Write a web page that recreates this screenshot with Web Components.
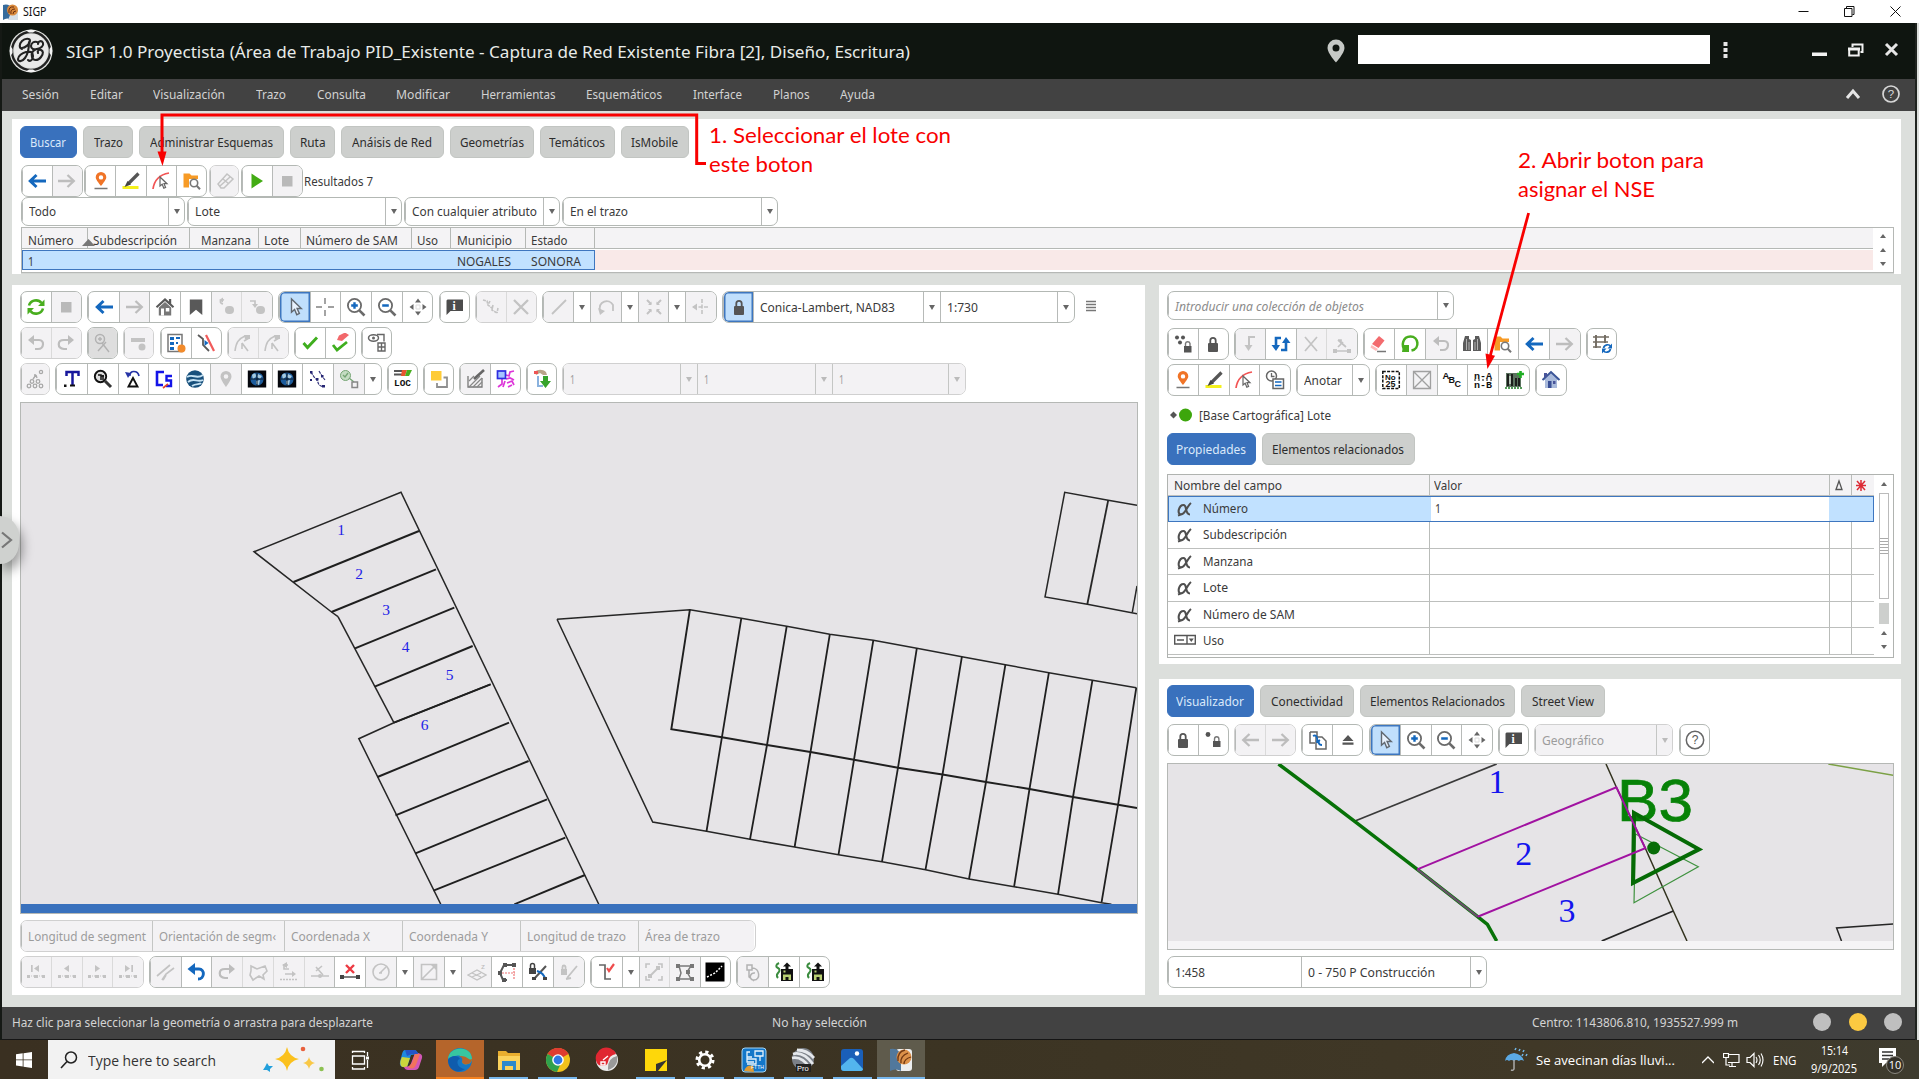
<!DOCTYPE html>
<html lang="es"><head><meta charset="utf-8"><title>SIGP</title>
<style>
html,body{margin:0;padding:0}
body{width:1919px;height:1079px;overflow:hidden;font-family:"Noto Sans","Open Sans",sans-serif;font-size:13px;color:#3a3a3a;background:#dcdfdc}
</style></head><body>
<sigp-app></sigp-app>
<script>
const G='#595959', D='#c3c3c3', B='#1468be';
const st=(d,c=G,w=1.6,x='')=>`<path d="${d}" fill="none" stroke="${c}" stroke-width="${w}" ${x}/>`;
const fl=(d,c=G,x='')=>`<path d="${d}" fill="${c}" ${x}/>`;
const tx=(x,y,s,t,c='#111',e='')=>`<text x="${x}" y="${y}" font-size="${s}" fill="${c}" ${e}>${t}</text>`;
const lens=(s)=>`<circle cx="8.5" cy="8.5" r="6.6" fill="#fff" stroke="#6b6b6b" stroke-width="1.8"/>${st('M13.3 13.3L18.5 18.5','#6b6b6b',2.6)}${st(s,B,2.4)}`;
const globe=`<rect x=".8" y="1.5" width="18.4" height="17" fill="#04060c"/><circle cx="10" cy="10" r="6.6" fill="#1d5c9c"/>${fl('M5 6c3-3 4-1 4 1s-3 2-3 4zM11 5l4 2-2 3-3-2zM9 12l4-1-1 5-3-1z','#a5c9df')}${st('M3.5 10h13M10 3.5v13','#08101c',.9)}`;
const save=`${st('M5 1c-4 2-3 4-1 5s2 3 0 5-1 4 0 5','#3b8c3f',2)}<rect x="7" y="7" width="12" height="12" fill="#111"/>${fl('M9 12.500h8v5.500H14.500v-3h-3v3H9zM9.500 8.500h2v2h-2z','#b8cf72')}${fl('M13 .5l4 4h-2.500V8h-3V4.500H9z','#111')}`;
const pad=(c,b)=>`<rect x="${b}" y="9" width="10" height="9" rx="1" fill="${c}"/>${st(`M${b+2.3} 9.5V6.5a2.7 2.7 0 0 1 5.4 0V9.5`,c,1.8)}`;
const nav=(d)=>fl(d,D)+st('M1 14h18',D,1.2,'stroke-dasharray="1 1"')+fl('M1 13h3v3H1zM8 13h4v3H8zM16 13h3v3h-3z',D);
const I={
refresh:st('M3 8.5C4.5 3 12 1.500 15.500 6M17 11.500C15.500 17 8 18.500 4.500 14','#49ae1f',2.6)+fl('M18.500 2.500v6.500h-6.500zM1.500 17.500V11H8z','#49ae1f'),
stop:fl('M5 5h10.500v10.500H5z','#b9b9b9'),
back:st('M19 10H3.500M9.500 4L3.200 10l6.300 6',B,2.9),
backG:st('M19 10H3.500M9.500 4L3.200 10l6.300 6','#bdbdbd',2.3),
fwd:st('M1 10h15.500M10.500 4l6.300 6-6.300 6','#bdbdbd',2.3),
home:fl('M10 1L.800 9.500 2.200 11 10 4l7.800 7 1.400-1.500-3-2.700V2h-2.300v2.600z')+fl('M3.800 10.500L10 5l6.200 5.500V18.500H3.800z','#777')+fl('M6 11.500h3v7H6zM10.800 11h3.500v3.500h-3.500z','#fff'),
mark:fl('M3.800 2.500h12.500v15.500L10 12.700 3.800 18z'),
gl1:st('M7 7C3 6 4 2 8 3',D,1.7)+fl('M7 .500v5L3 3z',D)+'<rect x="9" y="9" width="9" height="8" rx="4" fill="#c3c3c3"/>',
gl2:st('M3 4h5v4',D,1.7)+fl('M5 7h6l-3 4z',D)+'<rect x="9" y="9" width="9" height="8" rx="4" fill="#c3c3c3"/>',
cursor:`<path d="M6.500 2v13.200l3.100-2.800 2.200 5.300 2.600-1.200-2.300-5h4.200z" fill="#e8f2fd" stroke="#616870" stroke-width="1.400"/>`,
cross:st('M10 1v6M10 13v6M1 10h6M13 10h6','#a0a0a0',1.9),
zin:lens('M8.500 5.200v6.600M5.200 8.500h6.600'),zout:lens('M5.200 8.500h6.600'),
pan:fl('M10 1.500l3 4H7zM10 18.500l3-4H7zM1.500 10l4-3v6zM18.500 10l-4-3v6z','#666')+st('M8 8h4v4H8z','#dedede',1),
info:fl('M2.500 2.500h15.500v11.500H5.500L1.500 18V3.500z','#4c4c4c')+tx(7.500,12.800,11.500,'i','#fff','font-weight="700" font-family="Liberation Serif"'),
path:st('M2 3l4 1 1 4M9 4l-2 4 5 4M12 8l-1 5 5 3M17 11l-1 5',D,1.600,'stroke-dasharray="3 .8"'),
x:st('M3 3l14 14M17 3L3 17',D,2.300),
line:st('M3 17L17 3',D,1.800),
arc:st('M4 14C2 4 13 1 17 8v6',D,1.800)+fl('M2 11l7 3-5 4z',D),
expand:st('M3 3l4 4M17 3l-4 4M3 17l4-4M17 17l-4-4',D,2)+fl('M7.500 8V4.500L4 8zM12.500 8V4.500L16 8zM7.500 12v3.500L4 12zM12.500 12v3.500L16 12z',D),
plus:st('M2 10h16M11 2v16',D,1.600,'stroke-dasharray="4 1.500"')+fl('M1 10l5-3.500v7z',D),
lock:pad('#555',5),
undo:st('M4 7h9c6 0 5 9-1 9H9','#bdbdbd',2.200)+fl('M8 2v10L2 7z','#bdbdbd'),
redo:st('M16 7H8C1 7 1 15 8 16h3','#bdbdbd',2.200)+fl('M12 2v10l6-5z','#bdbdbd'),
undoB:st('M5 7h8c6 0 6 10-1 10',B,2.900)+fl('M9 1v12L1.500 7z',B),
zx:'<circle cx="7" cy="6" r="4.500" fill="none" stroke="#b2b2b2" stroke-width="1.500"/>'+st('M9 10l7 9M13 9l-8 9M7 4v4M5 6h4','#b2b2b2',1.400),
rem:fl('M2 5h14v4H2z',D)+'<circle cx="13" cy="14" r="3.500" fill="#c3c3c3"/>',
list:st('M2 1.500h14v17H2z','#777',1.500)+fl('M4 4h4v3H4zM4 9h4v3H4zM4 14h4v3H4zM10 4h4v2h-4zM10 9h2v2h-2z',B)+'<circle cx="15.500" cy="15.500" r="4" fill="#f28b2b"/>',
split:st('M2 2l5 4v6l6 6','#5a5a5a',1.800)+st('M10 2l8 16','#f15b5b',2.200)+fl('M8.500 7l4 3-4 3z',B),
bz:st('M2 18C3 10 5 6 12 3M11 8l5-3M9 10l6 8M9 10v6',D,1.600)+fl('M11 2h6v4h-5z',D),
check:st('M3.500 10l4 4.500L17 4.500','#3fae1e',2.900),
echeck:st('M3 12l4 5L17 9','#3fae1e',2.800)+fl('M9 2.500l6-3 4 2.500-7 6-5-1z','#f2686b'),
glist:'<ellipse cx="6.500" cy="5" rx="5" ry="3.200" fill="none" stroke="#666" stroke-width="1.500"/><circle cx="6.500" cy="5" r="1.500" fill="#666"/>'+st('M10 1.500h7v7M11 10h7v8h-7zM11 14h7M14.500 10v8','#666',1.400),
dots:'<g fill="none" stroke="#a9a9a9" stroke-width="1.300"><circle cx="4" cy="17" r="1.800"/><circle cx="10" cy="17" r="1.800"/><circle cx="16" cy="17" r="1.800"/><circle cx="7" cy="12.500" r="1.800"/><circle cx="13" cy="12.500" r="1.800"/><circle cx="16" cy="3" r="1.600"/><path d="M8 10l3-4M11 6l1 3M9 6h2"/></g>',
T:st('M4.500 7V3h12v4M10.500 3v13.500','#17179c',2.500)+fl('M8 15.500h5v2H8zM2 15.500h2.500V18H2z','#111'),
magq:'<circle cx="7.500" cy="7.500" r="5.700" fill="#ddd" stroke="#111" stroke-width="1.900"/>'+st('M5 6h3v5M10 6v5M8 7h3','#111',1.500)+st('M12 12l6 6','#333',3),
tri:st('M7 7c-1-6 8-6 9 0','#2634a6',1.700)+fl('M2 3l6 1-3 5z','#2634a6')+st('M10 9L5.500 17.500h9z','#111',1.900),
cs:st('M10 3H3v13h6','#1414e8',2.600)+st('M18 7h-5.500v4.500H17V17h-5','#1414e8',2.400)+st('M9 19L14 15','#e2432c',1.700),
gearth:'<circle cx="10" cy="10" r="8.800" fill="#18507c"/>'+st('M2 8c6-4 9 3 16-2M3 13c6-5 9 1 15-2M7 17c4-3 8-1 9-3','#c6e2f3',1.900),
pinG:fl('M10 2a5.500 5.500 0 0 1 5.500 5.500C15.500 11 10 18 10 18S4.500 11 4.500 7.500A5.500 5.500 0 0 1 10 2zm0 3.200a2.300 2.300 0 1 0 0 4.600 2.300 2.300 0 0 0 0-4.600z',D,'fill-rule="evenodd"'),
globe,
nodes:st('M3 3l3 5 3 3 2 5 4 2M11 2l3 5 3 4','#35357d',1.200,'stroke-dasharray="3 1"')+fl('M2 2h2.500v2.500H2zM8 9h2.500v2.500H8zM14 16h3v2.500h-3zM2 10h2v2H2zM13 6h2.500v2.500H13z','#252573'),
gnodes:'<circle cx="6.500" cy="6.500" r="5" fill="#c4dcc2" stroke="#75a574"/>'+st('M4 6l2 2 3-4M10 9l5 4','#75a574',1.400)+st('M13 13h5.500v5.500H13z','#888',1.500),
loc:fl('M1 1h8v2H1zM1 4.500h8v2H1z','#555')+fl('M9 1h5l-2 6H8z','#e8552f')+fl('M14 1h5l-3 6h-4z','#49ae1f')+tx(1,17,9,'LOC','#111','font-weight="700" font-family="Liberation Mono" textLength="17" lengthAdjust="spacingAndGlyphs"'),
ysq:fl('M2 2h10.500v9.500H2z','#fecb36')+st('M14.500 8.500H18v9.500H8v-4','#8f8f8f',1.800),
hatch:st('M2 7v11h14V9','#777',1.300)+st('M3 18L14 7M7 18l9-9M3 12l5-5M11 18l5-5','#888',1.200)+st('M8 10L18 1','#666',2.600),
pink:'<g fill="none" stroke="#dd35d8" stroke-width="1.700"><path d="M10 6l3 1 1-4 4-1M10 10l4-1 4 2M11 14l5-2 2 4M12 18l4-2M6 10v5l-4 3M9 12l-2 6"/></g><rect x="1.500" y="2" width="8" height="7.500" fill="#a6c5ff" stroke="#2d2de0" stroke-width="1.700"/>',
arrG:fl('M3 3c2-3 8-3 11 0l1 3-4 0-3-2-4 2z','#b9a489')+fl('M2 2h4v3H2z','#e55')+st('M6 7v10h5','#8ab2de',2)+fl('M11 7h5v5h3l-5.500 7L8 12h3z','#37a32c'),
pinO:fl('M10 1a5.300 5.300 0 0 1 5.300 5.300C15.300 9 10 15 10 15S4.700 9 4.700 6.300A5.300 5.300 0 0 1 10 1zm0 3.200a2.200 2.200 0 1 0 0 4.400 2.200 2.200 0 0 0 0-4.400z','#f07427','fill-rule="evenodd"')+st('M3.500 17.500h13','#777',1.500),
pen:st('M1.500 16.500h16','#f4f01c',3.200)+st('M7.500 12.500L17.500 2.500','#555',3.200)+fl('M6.500 10l3.500 3.500L3.500 16z','#444'),
sel:st('M2 18C3 11 6 4 18 2','#f25454',1.700)+`<path d="M9 6v9l2.200-1.800 1.600 4 1.800-.800-1.600-3.700h3z" fill="#fff" stroke="#666" stroke-width="1.200"/>`,
fold:fl('M1.500 2.500h6l2 2H16v12H1.500z','#f79b26')+fl('M7 8h11v11H7z','#fff')+'<circle cx="12" cy="12" r="3.700" fill="#fff" stroke="#777" stroke-width="1.600"/>'+st('M14.700 14.700l3.300 3.500','#777',2),
erG:st('M3 13l9-10 6 5-9 9H6zM8 8l6 5M5 15l10-9',D,1.500),
play:fl('M4.500 2.500v15L16 10z','#43ac14'),
dlock:'<g fill="#555"><circle cx="4" cy="3.500" r="2"/><circle cx="10" cy="3.500" r="2"/><circle cx="7" cy="8.500" r="2"/><rect x="11" y="12" width="7.500" height="6.500"/></g>'+st('M12.500 12V9.500a2.300 2.300 0 0 1 4.500 0V12','#777',1.400),
dlock2:'<g fill="#555"><circle cx="5" cy="4.500" r="2.400"/><rect x="10" y="11" width="7.500" height="6"/></g>'+st('M11.500 11V9a2.200 2.200 0 0 1 4.400 0V11','#777',1.400),
dn:st('M15 3H9v11',D,2)+fl('M4.500 11h8l-4 6z',D),
updn:st('M10 4H5v10M10 16h5V6',B,2.600)+fl('M.5 11h8.500l-4 6zM11 9h8.500l-4.500-6z',B),
xg:st('M4 3l12 14M16 3L4 17',D,1.700),
up:st('M1 17h18M6 6l8 7M6 13l5-5M6 6h3v4',D,1.700)+fl('M1 15h4v4H1zM15 15h4v4h-4z',D),
erase:fl('M10 2l5.500 4.500L9.500 14l-6.500-4z','#f36b6e')+fl('M2.500 11L9 15l-2 2-5.500-3.500z','#fbb')+st('M8 17.500h9','#777',1.500),
circG:st('M6 16.500C0 12 3 2.500 10.500 2.500c8 0 10 12 1 14','#49ae1f',2.500)+fl('M3 11h6v7H2z','#49ae1f'),
bino:fl('M3 2h4v3l2 1v11H1V9zM17 2h-4v3l-2 1v11h8V9z','#5b5b5b')+st('M4.500 5v11M15.500 5v11M7 8v8M13 8v8','#bbb',.9),
rail:st('M4 1v13M13 1v8','#736c62',1.900)+st('M1 3h16M1 8h15M1 13h8','#736c62',1.600)+st('M11.500 14c1-4 6-4 7-1.500M18.500 15c-1 4-6 4-7 1.500',B,1.700)+fl('M20 9.500v5h-4.500zM10 19.500v-5h4.500z',B),
clock:'<circle cx="6.500" cy="6" r="5" fill="#fff" stroke="#666" stroke-width="1.500"/>'+st('M6.500 3v3.500h3','#666',1.300)+`<path d="M8 9h10.500v9.500H8z" fill="#fff" stroke="#666" stroke-width="1.500"/>`+st('M10 12h6.500M10 15.500h6.500',B,1.500),
no25:`<rect x="1.800" y="1.500" width="16.500" height="17" fill="none" stroke="#111" stroke-width="1.500" stroke-dasharray="3 1.300"/>`+tx(4,9.500,8,'No','#111','font-weight="700"')+tx(4.500,17,9,'25','#111','font-weight="700"'),
xbox:st('M1.500 1.500h17v17h-17zM1.500 1.500l17 17M18.500 1.500l-17 17','#a0a0a0',1.300),
abc:tx(.5,9,9.500,'A','#111','font-weight="700"')+tx(6.500,13,9,'B','#111','font-weight="700"')+tx(12.500,17,9,'C','#111','font-weight="700"'),
nanb:tx(1,8.500,9,'n-A','#111','font-weight="700" textLength="18" lengthAdjust="spacingAndGlyphs" font-family="Liberation Mono"')+tx(1,17.500,9,'n-B','#111','font-weight="700" textLength="18" lengthAdjust="spacingAndGlyphs" font-family="Liberation Mono"')+st('M1 10h18','#111',1,'stroke-dasharray="2 2"'),
film:fl('M2 3h15v14H2z','#5b725f')+st('M4 4v12M8 4v12M12 8v8M15 8v8','#111',1.700)+st('M6 6v8','#e4ede4',1.300)+st('M13 4h7M16.500 1v7','#20ad24',2.600)+st('M1 18h17','#1d7d25',1.300,'stroke-dasharray="2 1"'),
house:fl('M10 1.500L1 10h3v8h12v-8h3z','#a9badb')+st('M1.500 10L10 2l8.500 8','#3b5598',2)+fl('M7 11h3.500v7H7z','#394f95')+fl('M12 11h2.500v3H12zM3 3h3v4H3z','#48549a'),
docs:st('M2 2h7v5M2 2v11h5M8 7h6l4 4v8H8z','#666',1.500)+st('M5 6c4-2 5 3 4 7M14 15c-4 0-4-4-2-5',B,1.900),
eject:fl('M10 5l5.500 6h-11zM4.500 12.500h11v2.300h-11z','#555'),
help:'<circle cx="10" cy="10" r="8.700" fill="none" stroke="#666" stroke-width="1.500"/>'+tx(6.700,14.200,12,'?','#555'),
n1:nav('M5 3h1.700v7H5zM13 3v7L8 6.500z'),n2:nav('M12 3v7L7 6.500z'),n3:nav('M8 3v7l5-3.500z'),n4:nav('M13.300 3H15v7h-1.700zM7 3v7l5-3.500z'),
seg:st('M1 14L14 3M6 18l4-6 8-6M7 18l3-5',D,1.700),
poly:st('M3 4l6 3 8-3 2 5-4 4 1 4-5-3-6 4-3-5 1-4z',D,1.600),
lr:st('M9 3H5v4h5M6 12h9',D,1.600)+fl('M8 0v6L3 3zM13 9v6l4-3z',D)+st('M1 17.500h18',D,1.500,'stroke-dasharray="2 1"'),
nx:st('M1 14h18M6 5l7 8M12 4l-6 5',D,1.600)+'<circle cx="10" cy="14" r="2" fill="#c3c3c3"/>',
rx:st('M6 3l8 8M14 3l-8 8','#ec3b43',2.400)+st('M2 15h16','#555',1.500)+fl('M0 13h4v4H0zM16 13h4v4h-4z','#444'),
circ:'<circle cx="10" cy="10" r="8" fill="none" stroke="#c3c3c3" stroke-width="1.600"/>'+st('M9 11l6-6M8 11h3',D,1.500),
sq:st('M2.500 2.500h15v15h-15zM3 17L17 3',D,1.600)+fl('M12 3h5v5z',D),
zz:st('M1 13l9-5 9 5-9 5zM5 15l9-4M5 11l9 4',D,1.300)+tx(14,6.5,8,'z','#bbb'),
rpoly:st('M16 3H7L3 11l3 7h4','#555',2)+st('M5 11h13M17 6v12','#e77',1.200,'stroke-dasharray="2 1"')+fl('M6 1h4v4H6zM15 1h4v4h-4zM1 9h4v4H1zM5 16h4v4H5z','#555'),
lk:fl('M1 6h7v6H1z','#444')+st('M2.500 6V3.500a2 2 0 0 1 4 0V6','#444',1.500)+st('M6 17L18 4','#555',2)+st('M9 9q7 2 8 8',B,2)+fl('M4 15h4v3H4zM15 15h4v3h-4z','#444'),
lkg:fl('M2 7h6v6H2z',D)+st('M3.500 7V5a1.500 1.500 0 0 1 3 0v2M8 16L18 4M7 17l5-1',D,1.800),
corner:st('M2 3h6v14h6','#666',1.700)+st('M10 6l2 3L17 2','#ee4d4d',2.200),
frame:st('M2 6V2h4M14 2h4v4M18 14v4h-4M6 18H2v-4',D,1.600)+st('M6 14l8-8',D,1.800)+fl('M4 12h4v4H4zM12 4h4v4h-4z',D),
star:st('M4 4h12l-4 6 4 7H4l2-6z','#7a7a7a',1.500)+fl('M1 2h4v4H1zM15 2h4v4h-4zM1 15h4v4H1zM15 15h4v4h-4zM11 8h4v4h-4z','#777'),
blk:fl('M.500 .500h19v19H.500z','#000')+st('M2 15l4-2 4-2 7-7','#fff',1.500,'stroke-dasharray="2 1.500"'),
clip:st('M4 3h5v5H4zM9 6c8 0 9 12 2 12-6 0-4-8 1-7M6 8v7l5 4',"#b2b2b2",1.500),
save,
};
const icon=(n,s=20)=>`<svg width="${s}" height="${s}" viewBox="0 0 20 20" font-family="Liberation Sans">${I[n]||''}</svg>`;
const define=(name,html,after)=>customElements.define(name,class extends HTMLElement{
 connectedCallback(){ if(this.shadowRoot)return; const r=this.attachShadow({mode:'open'}); r.innerHTML=typeof html==='function'?html(this):html; if(after)after(this,r);}
});
const F=(t,w,c='')=>`<fit-text w="${w}" ${c}>${t}</fit-text>`;

/* a line of text stretched horizontally to the width given in "w" */
define('fit-text',`<style>:host{display:block;white-space:nowrap;flex:none}span{display:inline-block;transform-origin:0 50%}</style><span><slot></slot></span>`,(h,r)=>{
 const s=r.querySelector('span'),w=+h.getAttribute('w'),n=s.getBoundingClientRect().width; h.style.width=w+'px'; if(n)s.style.transform=`scaleX(${w/n})`;
});

/* a group of joined toolbar cells: icon[-|*|#], v[-], or t|width|textWidth|text[|flag]; "~" stands for a comma inside a text */
define('tool-group',h=>{
 const items=h.getAttribute('items').split(','),w=h.getAttribute('w'),H=h.getAttribute('h')||32;
 const off=items.every(i=>/-$/.test(i));
 const cells=items.map(i=>{
  if(i[0]==='t'&&i[1]==='|'){const[,cw,tw,t,f]=i.split('|');return `<div class="c t ${f==='-'?'off':''} ${f==='i'?'it':''}" style="flex:none;width:${cw}px">${F(t.replace('~',','),tw)}</div>`}
  const m=i.match(/^([A-Za-z0-9]+)([-*#]?)$/),k={'-':'off','*':'on','#':'pr','':''}[m[2]];
  if(m[1]==='v')return `<div class="c v ${k}"><i></i></div>`;
  return `<div class="c ${k}">${icon(m[1])}</div>`;}).join('');
 return `<style>:host{display:flex;box-sizing:border-box;flex:none;width:${w}px;height:${H}px;border:1.500px solid ${off?'#d0d0d0':'#b3b8b4'};border-radius:7px;overflow:hidden;background:#fff}
 .c{flex:1 1 0;min-width:0;display:flex;align-items:center;justify-content:center;border-left:1px solid #b7bab8;box-sizing:border-box;overflow:hidden}
 .c:first-child{border-left:0}.c.off{background:#f3f2f4;color:#9c9c9c}.c.off+.c.off{border-left-color:#dadada}.c.t.off+.c.off,.c.v.off+.c.t.off,.c.t.off+.c.t.off{border-left-color:#c4c6c4}
 .c.on{background:#c0dffc;box-shadow:inset 0 0 0 1.500px #3d76bf;border-radius:5px 0 0 5px}.c.pr{background:#dedede}
 .c.t{justify-content:flex-start;padding-left:6px}.it{font-style:italic;color:#8b8b8b}
 .v{flex:none;width:17px}.v i{border:3.500px solid transparent;border-top:5px solid #666;border-bottom:0}.v.off i{border-top-color:#bbb}
 svg{display:block;flex:none}</style>${cells}`;});
const TG=(w,items,h)=>`<tool-group w="${w}" items="${items}"${h?` h="${h}"`:''}></tool-group>`;

define('tab-button',h=>`<style>:host{display:flex;align-items:center;justify-content:center;flex:none;box-sizing:border-box;width:${h.getAttribute('w')}px;height:32px;border:1.500px solid #c2c5c2;border-radius:6px;background:#cdcfcd;color:#2c2c2c}
:host([active]){background:#3971bd;border-color:#3971bd;color:#dbe9fa}</style>${F(h.getAttribute('label'),h.getAttribute('tw'))}`);
const TB=(l,w,tw,a='')=>`<tab-button label="${l}" w="${w}" tw="${tw}" ${a}></tab-button>`;

define('window-title',`<style>:host{display:flex;align-items:center;height:23px;background:#fff;color:#111;font-size:12px;padding-left:2px}b{flex:1}.w{display:flex;gap:35px;padding-right:18px}</style>
<svg width="17" height="18" viewBox="0 0 17 18" style="margin-right:4px"><path d="M1 2q7-2 9 5v10q-5-3-9 0z" fill="#356b9c"/><path d="M10 7h6v10H6z" fill="#d6dfe8"/><circle cx="10.500" cy="7" r="5.500" fill="#d98a3d"/><path d="M7 10q-1-7 5-6M9 11q-1-5 4-5M11 11q0-3 3-3" fill="none" stroke="#6b2f10"/></svg>
${F('SIGP',23.500)}<b></b><div class="w"><svg width="11" height="11"><path d="M0.5 5.500h10" stroke="#111"/></svg><svg width="11" height="11"><path d="M.500 2.500h7.500v8H.500zM2.500 2V.500h7.500v8H8.500" fill="none" stroke="#111"/></svg><svg width="11" height="11"><path d="M.500 .500l10 10M10.500 .500l-10 10" stroke="#111"/></svg></div>`);

define('app-header',`<style>:host{display:flex;align-items:center;height:56px;background:#0f1510;color:#e8ebe8;font-size:17px;padding-left:7px}
.sp{flex:1}.in{width:352px;height:29px;background:#fff;margin:0 13px 3px 13px}svg{flex:none}.m{margin-bottom:4px}</style>
<svg width="44" height="44" viewBox="0 0 44 44" style="margin-right:13px"><circle cx="22" cy="22" r="21.500" fill="#dfe1df"/><circle cx="22" cy="22" r="19" fill="none" stroke="#222" stroke-width="2.400"/><circle cx="22" cy="22" r="16.800" fill="#e9e9e9"/>
<g fill="none" stroke="#222" stroke-width="2.100" stroke-linecap="round"><path d="M13 20c-3-1-3-5 0-8s8-3 8 0-5 7-8 7M20 13c0 6-1 12-4 16s-7 4-7 1 4-6 8-7 7 0 7 4-3 6-5 4M28 13c-3-1-6 1-6 4s3 4 6 3c-4 1-6 4-5 8s6 4 9 0 2-6 0-7-4 1-3 3M28 20c4-1 7-3 6-6s-5-2-5 1"/></g><g fill="#f4f4f4"><path d="M17 1.500q5-1.500 10 0l-3 2h-4zM17 42.500q5 1.500 10 0l-3-2h-4zM1.500 17q-1.500 5 0 10l2-3v-4zM42.500 17q1.500 5 0 10l-2-3v-4z"/></g></svg>
${F('SIGP 1.0 Proyectista (Área de Trabajo PID_Existente - Captura de Red Existente Fibra [2], Diseño, Escritura)',844)}
<span class="sp"></span><svg style="margin-bottom:1px" width="18" height="24" viewBox="0 0 18 24"><path d="M9 .500a8.500 8.500 0 0 1 8.500 8.500C17.500 14 9 23.500 9 23.500S.500 14 .500 9A8.500 8.500 0 0 1 9 .500zm0 5a3.500 3.500 0 1 0 0 7 3.500 3.500 0 0 0 0-7z" fill="#c6c9c6" fill-rule="evenodd"/></svg>
<div class="in"></div><svg class="m" style="margin-bottom:3px" width="5" height="16"><path d="M0.500 0h4v4h-4zM.500 6h4v4h-4zM.500 12h4v4h-4z" fill="#e6e6e6"/></svg>
<svg width="90" height="18" viewBox="0 0 90 18" style="margin:0 14px 3px 83px"><path d="M1 11.5h15v3.500H1z" fill="#f2f2f2"/><path d="M38.200 8h9.500v6.500h-9.500zM41.500 6V3.500h10v7.500h-2" fill="none" stroke="#f2f2f2" stroke-width="2"/><path d="M37 8h12" stroke="#f2f2f2" stroke-width="3"/><path d="M75 3l11 11M86 3L75 14" stroke="#e6e6e6" stroke-width="3"/></svg>`);

define('menu-bar',`<style>:host{display:flex;align-items:center;gap:30.700px;height:32px;box-sizing:border-box;padding-bottom:2px;background:#424242;color:#d2d2d2;padding-left:20px}b{flex:1}svg{margin-right:-11px}svg:last-child{margin-right:14px}</style>
${[['Sesión',37],['Editar',33],['Visualización',72],['Trazo',30],['Consulta',49],['Modificar',54],['Herramientas',74.500],['Esquemáticos',76],['Interface',49],['Planos',36.500],['Ayuda',35]].map(a=>F(...a)).join('')}<b></b>
<svg width="16" height="12"><path d="M2 10l6-7 6 7" fill="none" stroke="#e6e6e6" stroke-width="3"/></svg><svg width="20" height="20" font-family="Liberation Sans"><circle cx="10" cy="10" r="8" fill="none" stroke="#d6d6d6" stroke-width="1.700"/><text x="6.800" y="14" font-size="11.500" fill="#ddd">?</text></svg>`);

define('search-panel',`<style>:host{display:flex;flex-direction:column;box-sizing:border-box;background:#fff;height:155px;width:1889px;padding:7px 8px 0 7.500px}
.r{display:flex;align-items:center}.tabs{gap:6px}.tools{gap:1.700px;margin:7px 0 0 1.500px;height:32px}.cb{gap:2px;margin-left:1.500px;height:28px;padding-bottom:1px}
.tb{display:flex;flex:none;width:1873px;height:46px;border:1px solid #b5b8b5;margin:1px 0 0 1.500px;box-sizing:border-box;box-shadow:0 1px #d4d7d4}
.g{flex:1;display:flex;flex-direction:column}.h{display:flex;height:20px;background:#f4f3f5;border-bottom:1px solid #b5b8b5}
.h div{box-sizing:border-box;border-right:1px solid #b5b8b5;display:flex;align-items:center;padding-left:6px;padding-top:3px;flex:none}
.row{display:flex;height:20px;margin-top:1px;background:#f9e9e8}.s{box-sizing:border-box;width:573px;border:1.500px solid #3e76bf;background:#c1e1ff;display:flex;align-items:center;padding-left:5px;padding-top:2px}
.sc{width:20px;display:flex;flex-direction:column;align-items:center;justify-content:space-between;padding:6px 0;box-sizing:border-box}.u{border:3px solid transparent;border-bottom:4px solid #666;border-top:0}.d{border:3px solid transparent;border-top:4px solid #666;border-bottom:0}</style>
<div class="r tabs">${TB('Buscar',57.500,36,'active')}${TB('Trazo',50,29)}${TB('Administrar Esquemas',144.500,123)}${TB('Ruta',45.500,25.500)}${TB('Anáisis de Red',102.500,80)}${TB('Geometrías',84,64)}${TB('Temáticos',75,56)}${TB('IsMobile',68.500,47)}</div>
<div class="r tools">${TG(61.500,'back,fwd-')}${TG(123,'pinO,pen,sel,fold')}${TG(30.500,'erG-')}${TG(61.500,'play,stop-')}${F('Resultados 7',69)}</div>
<div class="r cb">${TG(164,'t|146|27|Todo,v',29)}${TG(215,'t|197|25|Lote,v',29)}${TG(156,'t|138|125|Con cualquier atributo,v',29)}${TG(216,'t|198|58|En el trazo,v',29)}</div>
<div class="tb"><div class="g"><div class="h">
<div style="width:66px">${F('Número',45.500)}<svg width="14" height="8" style="position:relative;left:8px;top:2px;flex:none"><path d="M0 8L6.500 1 13 8z" fill="#777"/></svg></div><div style="width:102px;padding-left:5px">${F('Subdescripción',84)}</div><div style="width:69px;padding-left:11px">${F('Manzana',50)}</div><div style="width:42px;padding-left:5px">${F('Lote',25)}</div><div style="width:111px;padding-left:5px">${F('Número de SAM',92)}</div><div style="width:39px;padding-left:5px">${F('Uso',21)}</div><div style="width:75px">${F('Municipio',55)}</div><div style="width:69px;padding-left:5px">${F('Estado',36.500)}</div></div>
<div class="row"><div class="s"><div style="width:423px">${F('1',6)}</div><div style="margin-left:6px;width:74px">${F('NOGALES',54)}</div>${F('SONORA',50)}</div></div></div>
<div class="sc"><span class="u"></span><span class="u"></span><span class="d"></span></div></div>`);

const L=(pts,w=1.500,c='#262626')=>`<polyline points="${pts}" fill="none" stroke="${c}" stroke-width="${w}"/>`;
const top_=[[741.3,618.3],[786.7,626.3],[829.8,634.3],[873.3,640.3],[916.8,648.3],[961.9,656.7],[1005.4,664.7],[1048.9,672.7],[1092.4,680.3],[1136.3,687.7]];
const mid_=[[721.9,737.3],[767,745],[810.5,752],[854,759.7],[898,767.7],[942.5,774.5],[986,782],[1029.5,789],[1073,797],[1118.1,804.7]];
const bot_=[[706.5,831.3],[750,839.3],[794.6,847],[838.5,854.7],[882,861.7],[925.5,869.7],[969,879],[1014.1,886.7],[1058,894.3],[1101.5,902.7]];
define('parcel-map',`<style>:host{display:block;box-sizing:border-box;width:1118px;height:512px;border:1px solid #b5b8b5;border-top-width:1.500px}svg{display:block;background:#e6e4e7}.b{height:9px;background:#3971bd}</style>
<svg width="1116" height="501" viewBox="21 403 1116 501">
${L('338,616.7 331.5,612 254,551.7 401,492.3 598.8,904.3')}${L('338,616.7 393.9,722.7')}${L('490.6,684.3 393.9,722.7 358.8,738.7 440.8,904.3')}
${[[419,531,293.5,582],[436,569.3,331.5,612],[454.3,607.7,355,648.3],[472.7,646,374.7,686.7],[490.6,684.3,393.9,722.7],[509,722.7,377.5,777],[528.6,761,395.5,815.3],[547,799.3,415.5,853.3],[565.3,837.7,433.5,890.7],[585,875,514.3,904.3]].map(p=>L(p.join(' '),1.900,'#1f1f1f')).join('')}
${L('557,619.3 689.9,609.7 '+top_.join(' '))}${L('557,619.3 652.7,822 '+bot_.join(' ')+' 1111.4,904.3')}${L('689.9,609.7 671.3,729.3 '+mid_.join(' ')+' 1137,808',1.900,'#1f1f1f')}
${top_.map((t,i)=>L([t,mid_[i],bot_[i]].join(' '),1.800,'#1f1f1f')).join('')}
${L('1137,505.3 1108.2,500.3 1064.7,492.3 1045,597 1087.3,604.3 1137,613.7')}${L('1108.2,500.3 1087.3,604.3',1.800)}${L('1132.3,612.3 1137,586')}
<g font-family="Liberation Serif" font-size="15.500" fill="#2222e6" text-anchor="middle"><text x="341" y="535">1</text><text x="359" y="579">2</text><text x="386" y="614.500">3</text><text x="405.500" y="651.500">4</text><text x="449.500" y="679.500">5</text><text x="424.500" y="730">6</text></g></svg><div class="b"></div>`);

define('map-panel',`<style>:host{display:flex;flex-direction:column;box-sizing:border-box;width:1133px;height:710px;background:#fff;padding:6px 0 0 7.500px}.r{display:flex;flex:none;gap:5.200px;height:32px;margin-bottom:4px;align-items:center}parcel-map{flex:none;margin:3px 0 6px .500px}</style>
<div class="r">${TG(62.500,'refresh,stop-')}${TG(185.500,'back,fwd-,home,mark,gl1-,gl2-')}${TG(155.500,'cursor*,cross,zin,zout,pan')}${TG(31,'info')}${TG(62,'path-,x-')}${TG(175,'line-,v,arc-,v,expand-,v,plus-')}${TG(353,'lock*,t|170|135|Conica-Lambert~ NAD83,v,t|117|31|1:730,v')}<svg width="11" height="12" style="margin-left:6px;margin-bottom:2px"><path d="M0 1.500h10M0 4.500h10M0 7.500h10M0 10.500h10" stroke="#777" stroke-width="1.300"/></svg></div>
<div class="r">${TG(62.500,'undo-,redo-')}${TG(31,'zx#')}${TG(31,'rem-')}${TG(62,'list,split')}${TG(62,'bz-,bz-')}${TG(62,'check,echeck')}${TG(31,'glist')}</div>
<div class="r" style="gap:5px">${TG(30.500,'dots-')}${TG(327,'T,magq,tri,cs,gearth,pinG-,globe,globe,nodes,gnodes-,v')}${TG(31,'loc')}${TG(31,'ysq')}${TG(62,'hatch-,pink')}${TG(31,'arrG')}${TG(404,'t|117|5|1|-,v-,t|118|5|1|-,v-,t|116|5|1|-,v-')}</div>
<parcel-map></parcel-map>
<div class="r">${TG(736,'t|131|118|Longitud de segment|-,t|132|117|Orientación de segm‹|-,t|118|79|Coordenada X|-,t|118|79|Coordenada Y|-,t|118|99|Longitud de trazo|-,t|116|75|Área de trazo|-')}</div>
<div class="r" style="gap:5.300px">${TG(124,'n1-,n2-,n3-,n4-')}${TG(436,'seg-,undoB,redo-,poly-,lr-,nx-,rx,circ-,v,sq-,v,zz-,rpoly,lk,lkg-')}${TG(141,'corner,v,frame-,star-,blk')}${TG(94,'clip-,save,save')}</div>`);

define('object-panel',`<style>:host{display:flex;flex-direction:column;box-sizing:border-box;width:742px;height:379px;background:#fff;padding:6px 0 0 7.500px}.r{display:flex;flex:none;gap:5px;height:32px;align-items:center}
.r.lb{gap:0;height:20px;margin:9px 0 8px 3px}.tb{display:flex;flex:none;box-sizing:border-box;width:727px;height:184px;border:1px solid #b0b3b0;margin:9px 0 0 .500px}
.g{width:706px;overflow:hidden}.x{display:grid;grid-template-columns:262px 399.500px 22px 1fr;height:26.500px;box-sizing:border-box;border-bottom:1.500px solid #bdbfbd}.x>div{border-right:1px solid #b9bcb9;display:flex;align-items:center;padding-bottom:1px}.x>div:last-child{border-right:0}
.x>div:first-child{gap:8.500px;padding-left:6px}.x svg{width:20px;flex:none}.x .v{padding-left:4px}.x.h{height:20.500px;background:#f4f3f5}.x.h>div{padding-bottom:0;padding-top:1px}
.s{border:1.500px solid #3e76bf;background:#c1e1ff}.s>div{border:0}.x.s .v{background:#fff;margin-right:2px;padding-bottom:2px}.x.s>div:first-child{padding-bottom:2px;padding-left:5px}
.sc{flex:1;display:flex;flex-direction:column;align-items:center;padding:7px 0 8px;box-sizing:border-box}.u{border:3px solid transparent;border-bottom:4px solid #666;border-top:0}.d{border:3px solid transparent;border-top:4px solid #666;border-bottom:0;margin-top:10px}
.th{width:8px;height:105px;border:1px solid #bbb;margin:7px 0 4px;display:flex;align-items:center}.th i{width:8px;height:16px;background:repeating-linear-gradient(#aaa 0 1px,transparent 1px 3px)}.k{width:10px;height:21px;background:#cdcfcd;margin-bottom:7px}</style>
${TG(287,'t|269|189|Introducir una colección de objetos|i,v',29)}
<div class="r" style="margin-top:8px">${TG(62,'dlock,lock')}${TG(124,'dn-,updn,xg-,up-')}${TG(218,'erase,circG,undo-,bino,fold,back,fwd-')}${TG(31.500,'rail')}</div>
<div class="r" style="margin-top:4px">${TG(124,'pinO,pen,sel,clock')}${TG(74,'t|55|38|Anotar,v')}${TG(155,'no25,xbox-,abc,nanb,film')}${TG(32,'house')}</div>
<div class="r lb"><svg width="29" height="16"><path d="M3.500 4.500l3.500 3.500-3.500 3.500L0 8z" fill="#555"/><circle cx="15.500" cy="8" r="6.500" fill="#3da60c"/></svg>${F('[Base Cartográfica] Lote',132)}</div>
<div class="r" style="gap:5.800px">${TB('Propiedades',89.500,70,'active')}${TB('Elementos relacionados',153,132)}</div>
<div class="tb"><div class="g"><div class="x h"><div>${F('Nombre del campo',108)}</div><div class="v">${F('Valor',28)}</div><div><svg width="20" height="14" viewBox="0 0 20 14"><path d="M6 11.500L9 3l3 8.500z" fill="none" stroke="#555" stroke-width="1.300"/></svg></div><div><svg viewBox="0 0 20 14" height="14"><path d="M5 3l8 9M13 3l-8 9M9 2v11M4 7.500h10" stroke="#dd2b35" stroke-width="1.500"/></svg></div></div>
${[['Número',45],['Subdescripción',84],['Manzana',50],['Lote',25],['Número de SAM',92],['Uso',21]].map((a,i)=>`<div class="x ${i?'':'s'}"><div>${i<5?`<svg width="20" height="16" viewBox="0 0 20 16" style="position:relative;top:1px"><path d="M17 2C13 5 11 14 7 13.500 2.500 13 5 4 9.500 4c4 0 1 9.500 6.500 9.500M4 14.500L8 13M9.500 4" fill="none" stroke="#4f4f4f" stroke-width="2.100"/></svg>`:`<svg width="22" height="12" viewBox="0 0 22 12" style="width:22px;margin-right:-2px"><path d="M.700 1.500h20.600v8.500H.700zM13 1.500V10M3 6h7" fill="none" stroke="#555" stroke-width="1.400"/><path d="M14.800 4.500h5L17.300 8z" fill="#555"/></svg>`}${F(...a)}</div><div class="v">${i?'':F('1',6)}</div><div></div><div></div></div>`).join('')}</div>
<div class="sc"><span class="u"></span><div class="th"><i></i></div><div class="k"></div><span class="u"></span><span class="d"></span></div></div>`);

define('viewer-panel',`<style>:host{display:flex;flex-direction:column;box-sizing:border-box;width:742px;height:316px;background:#fff;padding:6px 0 0 7.500px}.r{display:flex;flex:none;gap:5.200px;height:32px;align-items:center}
.mp{flex:none;box-sizing:border-box;width:727px;height:187px;border:1px solid #b5b8b5;margin:7px 0 6px .500px;background:#f5f4f6}.mp svg{display:block;background:#e6e4e7}</style>
<div class="r" style="gap:6.300px">${TB('Visualizador',87.500,68,'active')}${TB('Conectividad',93.500,72)}${TB('Elementos Relacionados',155,135)}${TB('Street View',84,62)}</div>
<div class="r" style="margin-top:7px">${TG(62,'lock,dlock2')}${TG(62.500,'backG-,fwd-')}${TG(62,'docs,eject')}${TG(124,'cursor*,zin,zout,pan')}${TG(31.500,'info')}${TG(139,'t|121|62|Geográfico|-,v-')}${TG(31.500,'help')}</div>
<div class="mp"><svg width="725" height="177" viewBox="1168 764 725 177">
${L('1355,821 1496.7,764',1.800,'#3a3a3a')}${L('1278.5,764 1326.6,800 1356,822.3 1417.3,869.3 1477.6,916.7 1487.4,924.3 1496.7,941',3.500,'#087208')}
${L('1606,764 1616.4,787.3 1645.3,848.3 1673.3,911 1687,941',1.500,'#33331f')}${L('1673.3,911 1601.7,941',1.800)}
<text x="1617" y="820.500" font-family="Liberation Sans" font-size="58.500" fill="#078207" stroke="#078207" stroke-width=".7" textLength="76" lengthAdjust="spacingAndGlyphs">B3</text>
<path d="M1635.500 834L1698.300 866.700 1634 902.700z" fill="none" stroke="#3f923f" stroke-width="1.200"/>
<path d="M1634 813L1699 849.300 1633 883z" fill="none" stroke="#056a05" stroke-width="4"/><circle cx="1653.700" cy="848" r="6.500" fill="#086d08"/>
${L('1477.6,916.7 1417.3,869.3',2.200,'#69506a')}${L('1417.3,869.3 1616.4,787.3 1645.3,848.3 1477.6,916.7',2,'#a112a1')}
${L('1828.3,764 1893.5,775.3',1.500,'#7ba045')}${L('1893.5,924 1836.6,928 1841.5,941')}
<g font-family="Liberation Serif" font-size="34" fill="#1414ee" text-anchor="middle"><text x="1497" y="792.500">1</text><text x="1523.700" y="864.500">2</text><text x="1567" y="921.500">3</text></g></svg></div>
<div class="r">${TG(320.500,'t|133|30|1:458,t|169|127|0 - 750 P Construcción,v')}</div>`);

define('status-bar',`<style>:host{display:flex;align-items:center;height:32px;box-sizing:content-box;background:#424242;border-bottom:1px solid #151515;color:#d4d4d4;padding-left:10px}fit-text{margin-bottom:2px}i{width:18px;height:18px;border-radius:9px;background:#bfbfbf;margin-right:17.500px;margin-bottom:2px;flex:none}</style>
${F('Haz clic para seleccionar la geometría o arrastra para desplazarte',361)}<span style="width:399px"></span>${F('No hay selección',95)}<span style="width:665px"></span>${F('Centro: 1143806.810, 1935527.999 m',206)}<span style="width:75px;flex:none"></span><i></i><i style="background:#fbc941"></i><i style="margin-right:0"></i>`);

const app=(svg,u,x='')=>`<div class="a ${u?'u':''}" style="${x}"><svg width="26" height="26" viewBox="0 0 26 26" font-family="Liberation Sans">${svg}</svg></div>`;
define('task-bar',`<style>:host{display:flex;align-items:stretch;height:39px;background:linear-gradient(90deg,#3a3021,#3c3423 50%,#403827 80%,#3e3b2e);color:#fff;font-family:"Open Sans","Noto Sans",sans-serif}
.st{width:48px;display:flex;align-items:center;justify-content:center}.se{width:287px;background:#f2f2f2;display:flex;align-items:center;color:#333;font-size:15px;box-sizing:border-box;padding-left:12px}
.a{width:49.100px;flex:none;display:flex;align-items:center;justify-content:center;position:relative}.u{box-shadow:inset 0 -2px #78b8ee;margin:0 5px;width:39.100px}.tr{display:flex;align-items:center;flex:1;font-size:13.500px}.sp{flex:1}.ck{display:flex;flex-direction:column;align-items:center;font-size:12px;line-height:18px;margin:0 21px 0 15px}</style>
<div class="st"><svg width="16" height="16"><path d="M0 2.300L6.700 1.300V7.500H0zM7.500 1.200L16 0v7.500H7.500zM0 8.300h6.700v6.200L0 13.600zM7.500 8.300H16V16l-8.500-1.200z" fill="#fff"/></svg></div>
<div class="se"><svg width="18" height="18"><circle cx="11" cy="6.500" r="5.500" fill="none" stroke="#222" stroke-width="1.500"/><path d="M7 10.500L1 17" stroke="#222" stroke-width="1.600"/></svg><span style="width:10px"></span>${F('Type here to search',128)}<span class="sp"></span><svg width="62" height="28" viewBox="0 0 62 28"><path d="M24 1q2 10 12 12-10 2-12 12-2-10-12-12 10-2 12-12z" fill="#fbc11d"/><path d="M46 11q1 5 6 6-5 1-6 6-1-5-6-6 5-1 6-6z" fill="#f9c846"/><path d="M4 17l2 3 4 0-3 3 0 3-3-2-4 0 2-3z" fill="#22a0dc"/><circle cx="40" cy="3" r="2.300" fill="#e8603d"/><circle cx="58.500" cy="23" r="2.300" fill="#8cc152"/></svg><span style="width:10px"></span></div>
${app('<path d="M5.500 6V4.500h12V6M5.500 20v2h12v-2M5.500 9h12v8h-12zM20.500 5v4M20.500 13v8" fill="none" stroke="#fff" stroke-width="1.300"/><path d="M19 9.500h3v3h-3z" fill="#fff"/>',0,'width:50px')}
${app('<path d="M7 3h9q3 0 4 4l-7 1-4 12H6q-5 0-4-5l2-8q1-4 3-4z" fill="#1d8ae0"/><path d="M4 10q-3 6-1 9 2 2 6 1l3-9z" fill="#cbd53c"/><path d="M17 6h3q5 1 4 5l-3 9q-1 3-4 3h-7q-3 0-4-3l6-1z" fill="#d357b8"/><path d="M17 7l-3 9-4 4q5 4 8-2l4-11z" fill="#f3735c"/><path d="M7 3h9q3 0 4 4h-6l-5 2z" fill="#2455c8"/>',0,'width:51px')}
${app('<circle cx="13" cy="13" r="12" fill="#1577c4"/><path d="M1 12C2-2 25-2 25 12c0 6-9 7-10 3 3-4-2-8-7-6-3 1-6 1-7 3z" fill="#37c6a0"/><path d="M1 13c3-5 10-5 12-1-4 0-4 9 5 10-9 6-17 0-17-9z" fill="#0f5cad"/><path d="M15 15c1-3 0-5-3-6 8-1 10 5 13 3 0 6-9 7-10 3z" fill="#b5652b"/>',0,'width:48px;background:#b5652b;box-shadow:inset 0 -2px #f58220')}
${app('<path d="M2 4h8l2 2h12v17H2z" fill="#e9ae2f"/><path d="M2 9h22v14H2z" fill="#fbd25c"/><path d="M6 14h14v9h-3v-4H9v4H6z" fill="#2d89cc"/>',1)}
${app('<circle cx="13" cy="13" r="12" fill="#f1c21b"/><path d="M13 13L2.600 7A12 12 0 0 1 23.400 7z" fill="#de3c31"/><path d="M13 13L2.600 7A12 12 0 0 0 12 25l4-9z" fill="#2fa14d"/><path d="M2.600 7A12 12 0 0 1 23.400 7H13z" fill="#de3c31"/><circle cx="13" cy="13" r="5.800" fill="#fff"/><circle cx="13" cy="13" r="4.400" fill="#2f77e5"/>',1)}
${app('<circle cx="13" cy="13" r="11" fill="#ececec"/><path d="M2.500 15A10.500 10.500 0 0 1 22 7q-7 1-8 8-1 4-5 4-5 0-6.500-4z" fill="#e02731"/><path d="M14 21q0-10 9-12 2 10-9 14z" fill="#999"/><path d="M7 15h4v3H7zM9 13l5-4" fill="none" stroke="#fff" stroke-width="1.400"/>')}
${app('<path d="M2 2h22v22H2z" fill="#fed70a"/><path d="M13 24V17l11-4-9 11z" fill="#333"/>',1)}
${app('<circle cx="13" cy="13" r="5.800" fill="none" stroke="#fff" stroke-width="2.600"/><circle cx="13" cy="13" r="8" fill="none" stroke="#fff" stroke-width="3" stroke-dasharray="3.200 3.080"/>',1)}
${app('<rect x="1" y="1" width="24" height="24" rx="3" fill="#1377c9" stroke="#a4d4f2"/><path d="M3 24q3-7 9-5l1 6z" fill="#e09b33"/><path d="M9 5H6v5h5M6 10v5h7M14 4h8v5h-8zM6 12h9v5H6M19 9v5" fill="none" stroke="#e6f3fb" stroke-width="1.300"/><text x="10" y="22" font-size="6" fill="#fff" textLength="13" lengthAdjust="spacingAndGlyphs">FTTH</text>',1)}
${app('<circle cx="13" cy="12" r="11" fill="#7b8088"/><path d="M3 7q10-3 20 10M2 11q10-2 18 10M7 3q10 0 17 8" fill="none" stroke="#e5e8ec" stroke-width="2.800"/><path d="M6 17h15v8H6z" fill="#222"/><text x="7" y="23.500" font-size="7.500" fill="#fff">Pro</text>',1)}
${app('<rect x="2" y="2" width="22" height="22" rx="3" fill="#1a5fb8"/><path d="M2 19l9-8q2-1 4 1l9 10q0 2-3 2H5q-3 0-3-3z" fill="#53b5ee"/><circle cx="18" cy="6.500" r="2.200" fill="#fff"/>',1)}
${app('<rect x="8" y="2" width="16" height="22" rx="3" fill="#eceef0"/><path d="M2 2q10-2 11 9v13q-5-3-11 0z" fill="#51789c"/><circle cx="16" cy="10" r="7.500" fill="#dc914a"/><path d="M10 14q-1-9 7-11M13 16q-1-7 7-10M16 17q0-5 7-7" fill="none" stroke="#713813" stroke-width="1.300"/>',0,'width:48px;background:#5f5b4c;box-shadow:inset 0 -2px #78b8ee')}
<div class="tr"><span class="sp"></span><svg width="24" height="26" viewBox="0 0 24 26"><path d="M1 14q1-7 9-8 8 1 10 8-3-2-5 0-3-2-5 0-3-2-5 0-2-2-4 0z" fill="#5ba9e4"/><path d="M10 13v9q-1 2-3 1" fill="none" stroke="#aaa" stroke-width="1.500"/><path d="M11 3l1-2M15 4l1-2M19 5l1-2M18 9l1-2M22 9l1-2" stroke="#73b7e8" stroke-width="1.500"/></svg><span style="width:8px"></span>${F('Se avecinan días lluvi...',139)}<span style="width:27px"></span>
<svg width="12" height="8"><path d="M0 7l6-6 6 6" fill="none" stroke="#fff" stroke-width="1.300"/></svg><svg width="17" height="16" style="margin:0 6px 0 9px"><path d="M5 2.500h11v8H5M9 10.500v4M6 14.500h7M.500 1.500h5v4h-5zM3 6v7h4" fill="none" stroke="#fff" stroke-width="1.200"/></svg><svg width="18" height="16"><path d="M1 5.500h3l4-4v13l-4-4H1z" fill="none" stroke="#fff" stroke-width="1.200"/><path d="M10 5q2 3 0 6M12.500 3q3.500 5 0 10M15 1.500q4 6.500 0 13" fill="none" stroke="#fff" stroke-width="1.100"/></svg><span style="width:9px"></span>${F('ENG',23.500)}
<div class="ck">${F('15:14',27)}${F('9/9/2025',46)}</div><svg width="26" height="28" viewBox="0 0 26 28" style="margin-right:15px"><path d="M1 2h17v15H8l-4 4v-4H1z" fill="#fff"/><path d="M4 6h11M4 9.500h11M4 13h7" stroke="#333" stroke-width="1.300"/><circle cx="17" cy="19" r="8.500" fill="#333028" stroke="#8b8880"/><text x="17" y="23.200" font-size="11" fill="#fff" text-anchor="middle">10</text></svg></div>`);

/* callouts that float over the window */
define('note-layer',`<style>:host{position:absolute;inset:0;pointer-events:none;color:#f80000;font-family:Lato,sans-serif;font-size:21px;line-height:29px}svg{position:absolute;left:0;top:0}.n{position:absolute}</style>
<svg width="1919" height="1079"><path d="M706 163.500H696.700V115H162V154" fill="none" stroke="#f80000" stroke-width="3"/><path d="M157.500 151.500h9L162.500 166z" fill="#f80000"/><path d="M1528.600 213L1490.500 355" stroke="#f80000" stroke-width="2.800"/><path d="M1485.500 353.500l9.500 2.300L1487.400 369z" fill="#f80000"/></svg>
<div class="n" style="left:709px;top:120px">${F('1. Seleccionar el lote con',242)}${F('este boton',104)}</div><div class="n" style="left:1518px;top:145px">${F('2. Abrir boton para',186)}${F('asignar el NSE',137)}</div>`);
define('side-handle',`<style>:host{position:absolute;left:0;top:516px;width:19px;height:48px;overflow:visible}div{width:19px;height:48px;border-radius:0 22px 22px 0/0 24px 24px 0;background:#cfd1cf;box-shadow:3px 7px 12px #0006;display:flex;align-items:center}</style><div><svg width="13" height="18"><path d="M2 1.500l9 7.500-9 7.500" fill="none" stroke="#777" stroke-width="2.200"/></svg></div>`);

define('sigp-app',`<style>:host{display:flex;flex-direction:column;width:1919px;height:1079px;position:relative}.w{display:flex;flex-direction:column;height:1017px;background:#dcdfdc;border-left:2px solid #151915;border-right:2px solid #202420;box-sizing:border-box;width:1917px}
.m{flex:1;display:flex;flex-direction:column;padding:8px 0 0 10px;gap:11px}.c{display:flex;gap:14px}.k{display:flex;flex-direction:column;gap:15px}</style>
<window-title></window-title><div class="w"><app-header></app-header><menu-bar></menu-bar><div class="m"><search-panel></search-panel><div class="c"><map-panel></map-panel><div class="k"><object-panel></object-panel><viewer-panel></viewer-panel></div></div></div><status-bar></status-bar></div><task-bar></task-bar><side-handle></side-handle><note-layer></note-layer>`);
</script></body></html>
